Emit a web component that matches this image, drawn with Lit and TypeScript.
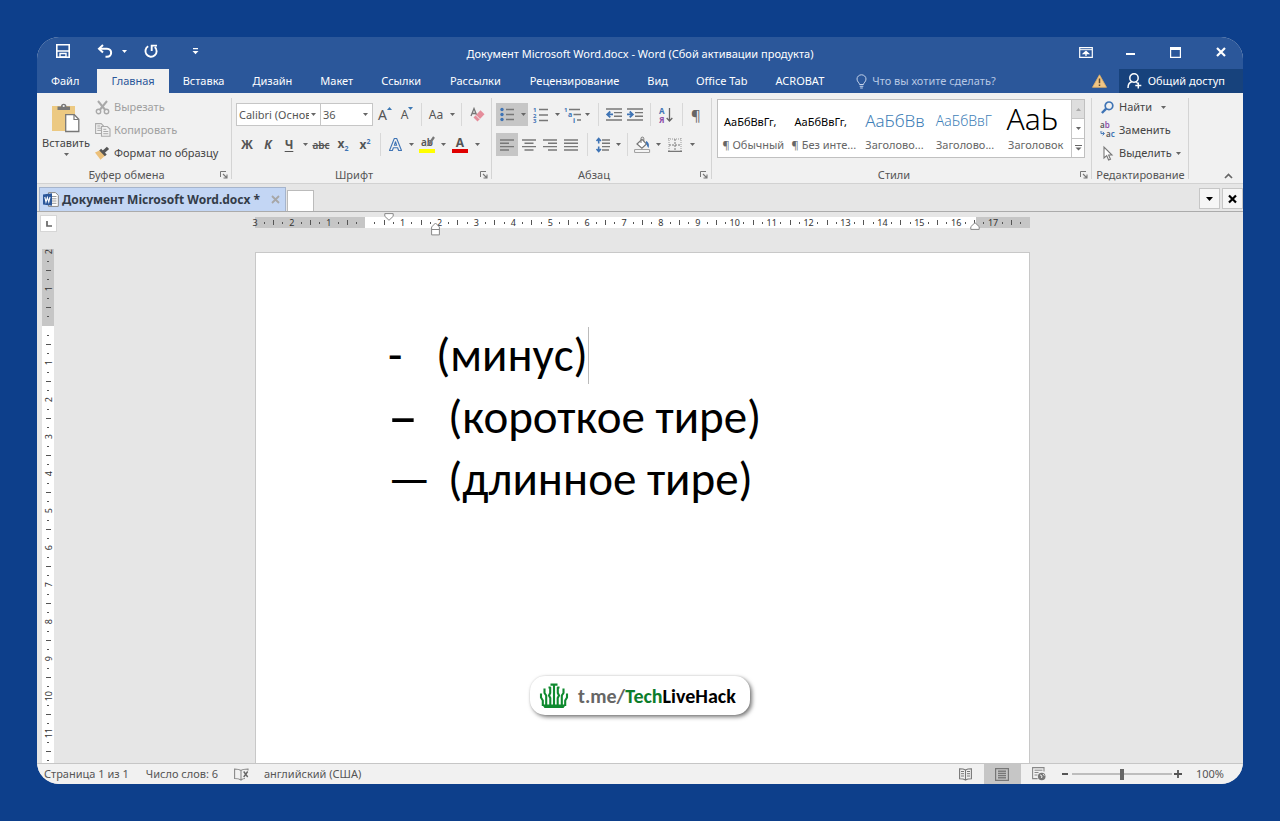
import { LitElement, html, svg, css } from "lit";
import { customElement } from "lit/decorators.js";
import { classMap } from "lit/directives/class-map.js";

type Kind = "num" | "dot" | "bar";
interface Tick { kind: Kind; text: string }

/** Four ticks for each centimetre: its number, a dot, a bar and a dot. */
function ticks(before: number, after: number): Tick[] {
  const out: Tick[] = [];
  for (let cm = -before; cm < after; cm++) {
    out.push({ kind: "num", text: cm === 0 ? "" : String(Math.abs(cm)) });
    out.push({ kind: "dot", text: "" }, { kind: "bar", text: "" }, { kind: "dot", text: "" });
  }
  return out;
}

const icon = (w: number, h: number, body: unknown) =>
  html`<svg width=${w} height=${h} viewBox="0 0 ${w} ${h}" fill="none" aria-hidden="true">${body}</svg>`;

const caret = () => icon(5, 3, svg`<path d="M0 0h5L2.500 3z" fill="#666"/>`);

const lines = (rows: number[][], color = "#777") =>
  rows.map(([x, y, w]) => svg`<path d="M${x} ${y}h${w}" stroke=${color} stroke-width="1.4"/>`);

const icons = {
  save: icon(16, 16, svg`<path d="M1.8 1.8h12.4v12.4H1.8z" stroke="#fff" stroke-width="1.6"/><path d="M1.8 8h12.4" stroke="#fff" stroke-width="1.6"/><path d="M5 10.500h6V14H5z" stroke="#fff" stroke-width="1.4"/>`),
  undo: icon(16, 14, svg`<path d="M6 1L2 4.700l4 3.800" stroke="#fff" stroke-width="2"/><path d="M2.500 4.700H10c5.500 0 5.500 8 0 8H8.500" stroke="#fff" stroke-width="2"/>`),
  redo: icon(14, 14, svg`<path d="M4.200 2.300A5.600 5.600 0 1 0 10.800 3" stroke="#fff" stroke-width="1.900"/><path d="M7.700 7V1.600h5.300" stroke="#fff" stroke-width="1.900"/>`),
  custom: icon(7, 7, svg`<path d="M1 .7h5" stroke="#fff" stroke-width="1.300"/><path d="M.5 3h6l-3 3.200z" fill="#fff"/>`),
  display: icon(14, 11, svg`<path d="M.7.700h12.600v9.600H.7z" stroke="#fff" stroke-width="1.200"/><path d="M1 2.700h12" stroke="#fff"/><path d="M7 9V5M4.500 6.600L7 4.300l2.500 2.300z" stroke="#fff" stroke-width="1.300"/>`),
  min: icon(10, 10, svg`<path d="M0 7h9" stroke="#fff" stroke-width="2"/>`),
  max: icon(11, 11, svg`<path d="M.6 1h9.800v9.300H.6z" stroke="#fff" stroke-width="1.200"/><path d="M0 1.500h11" stroke="#fff" stroke-width="3"/>`),
  close: icon(10, 10, svg`<path d="M1 1l8 8M9 1L1 9" stroke="#fff" stroke-width="2.200"/>`),
  bulb: icon(11, 15, svg`<path d="M3.500 10.500C3.500 8.500 1 8 1 5a4.500 4.200 0 0 1 9 0c0 3-2.500 3.500-2.500 5.500z" stroke="#c3d2ea"/><path d="M3.700 12.300h3.600M4.200 14h2.600" stroke="#c3d2ea"/>`),
  warn: icon(15, 14, svg`<path d="M7.500.8L14.500 13.300H.5z" fill="#f2c685" stroke="#e2ae62" stroke-width=".8"/><path d="M7.500 4.500v4.800M7.500 10.400v1.600" stroke="#5b4a35" stroke-width="1.500"/>`),
  person: icon(15, 16, svg`<circle cx="7" cy="5" r="4.200" stroke="#fff" stroke-width="1.500"/><path d="M1 15c0-3.500 1.800-5.800 4.300-6.400M8.500 8.600c1 .4 1.600 1 2.100 1.900M11.300 9.500v6M8.300 12.500h6" stroke="#fff" stroke-width="1.500"/>`),
  paste: icon(28, 31, svg`<path d="M0 4h23v25H0z" fill="#ecc982"/><path d="M5.500 8V4.500H9a2.700 2.700 0 0 1 5.400 0H18V8z" fill="#777"/><circle cx="11.700" cy="4" r="1.100" fill="#f1f1f1"/><path d="M13.700 12.700h8.600l4.500 4.500V29.500H13.700z" fill="#fff" stroke="#777" stroke-width="1.300"/><path d="M22 13v4.500h4.600" stroke="#777" stroke-width="1.200"/>`),
  cut: icon(15, 15, svg`<path d="M3 1l7.300 9M12 1L4.700 10" stroke="#a9a9a9" stroke-width="2"/><circle cx="3.500" cy="11.500" r="2.200" stroke="#a9a9a9" stroke-width="1.400"/><circle cx="11.500" cy="11.500" r="2.200" stroke="#a9a9a9" stroke-width="1.400"/>`),
  copy: icon(16, 14, svg`<path d="M.6.600h5.600L8.500 3v7.500H.6z" stroke="#aaa" stroke-width="1.100"/><path d="M2.300 3h3M2.300 5.200h4M2.300 7.400h4" stroke="#aaa"/><path d="M6.500 3.500h5.800L15 6v7.300H6.500z" fill="#f1f1f1" stroke="#aaa" stroke-width="1.100"/><path d="M8.300 6.300h3M8.300 8.500h5M8.300 10.700h5" stroke="#aaa"/>`),
  brush: icon(15, 14, svg`<path d="M0 6.500L5.500 4l5 5.200-5 4.600z" fill="#ecc07a"/><path d="M5.200 3.700l5.600 5.600" stroke="#555" stroke-width="2.600"/><path d="M8.300 6.200l4.700-4.400" stroke="#555" stroke-width="3.200"/>`),
  launch: icon(8, 8, svg`<path d="M.5 6V.5H6" stroke="#777"/><path d="M3 3l3.500 3.500M7 3.500V7H3.500" stroke="#777" stroke-width="1.100"/>`),
  up: icon(5, 3, svg`<path d="M0 3h5L2.500 0z" fill="#3c78b4"/>`),
  down: icon(5, 3, svg`<path d="M0 0h5L2.500 3z" fill="#3c78b4"/>`),
  eraser: icon(15, 15, svg`<path d="M1 9L4 1.500 7 9M2 6.500h4" stroke="#777" stroke-width="1.300"/><path d="M3.500 10.500l7-7.200 4 4-7 7.200z" fill="#e58d9b"/><path d="M5.800 8.200l4 4" stroke="#f1f1f1"/>`),
  outline: icon(15, 15, svg`<path d="M1.500 13.500L6.300 1.500h2.400l4.800 12h-2.900l-1-2.800H5.400l-1 2.800zM6.300 8.300h2.400L7.500 4.700z" stroke="#3f74b5" stroke-width="1.100" stroke-linejoin="round"/>`),
  pen: icon(10, 11, svg`<path d="M9 1L4.500 7.500" stroke="#777" stroke-width="2.200"/><path d="M4.700 6.800L1 10.500l4.500-1.800z" fill="#777"/>`),
  bullets: icon(14, 15, svg`${[2.5, 7.5, 12.5].map(y => svg`<circle cx="2" cy=${y} r="1.700" fill="#3f74b5"/>`)}${lines([[6, 2.5, 8], [6, 7.5, 8], [6, 12.5, 8]])}`),
  numbers: icon(15, 16, svg`${["1", "2", "3"].map((n, i) => svg`<text x="0" y=${5 + i * 5.5} font-size="6" font-weight="700" fill="#3f74b5">${n}</text>`)}${lines([[6, 2.5, 9], [6, 8, 9], [6, 13.5, 9]])}`),
  levels: icon(17, 16, svg`<text x="0" y="5" font-size="6" font-weight="700" fill="#3f74b5">1</text><text x="4" y="10" font-size="7" font-weight="700" fill="#3f74b5">a</text><text x="9" y="16" font-size="7" font-weight="700" fill="#3f74b5">i</text>${lines([[5, 2.5, 11], [9.5, 7.5, 7.500], [13, 13, 4]])}`),
  outdent: icon(16, 13, svg`${lines([[0, 1, 16], [8, 4.600, 8], [8, 8.200, 8], [0, 12, 16]])}<path d="M7 6.400H2M4.300 3.500L1.200 6.400l3.100 2.900" stroke="#3f74b5" stroke-width="1.800"/>`),
  indent: icon(16, 13, svg`${lines([[0, 1, 16], [8, 4.600, 8], [8, 8.200, 8], [0, 12, 16]])}<path d="M0 6.400h5M2.700 3.500l3.100 2.900-3.100 2.900" stroke="#3f74b5" stroke-width="1.800"/>`),
  sort: icon(14, 16, svg`<text x="0" y="6.500" font-size="8" font-weight="700" fill="#3f74b5">А</text><text x="0" y="15.500" font-size="8" font-weight="700" fill="#8d4fa8">Я</text><path d="M10.500 1v13M7.700 11l2.800 3 2.800-3" stroke="#666" stroke-width="1.300"/>`),
  alignL: icon(14, 12, svg`${lines([[0, 1, 14], [0, 4.300, 9], [0, 7.600, 14], [0, 11, 9]])}`),
  alignC: icon(14, 12, svg`${lines([[0, 1, 14], [2.500, 4.300, 9], [0, 7.600, 14], [2.500, 11, 9]])}`),
  alignR: icon(14, 12, svg`${lines([[0, 1, 14], [5, 4.300, 9], [0, 7.600, 14], [5, 11, 9]])}`),
  alignJ: icon(14, 12, svg`${lines([[0, 1, 14], [0, 4.300, 14], [0, 7.600, 14], [0, 11, 14]])}`),
  spacing: icon(14, 16, svg`${lines([[6, 3, 8], [6, 6.300, 8], [6, 9.600, 8], [6, 13, 7]])}<path d="M2.700 2v4.500M2.700 9.500V14M.5 4l2.200-2.600L4.900 4M.5 12l2.200 2.600L4.900 12" stroke="#3f74b5" stroke-width="1.600"/>`),
  bucket: icon(17, 16, svg`<path d="M3 7l5-4.700 4.500 4.700-4.600 4.300z" fill="#fff" stroke="#777" stroke-width="1.200"/><path d="M7 6V1.500a1.400 1.400 0 0 1 2.800 0V4" stroke="#777"/><path d="M12 4c3 1.500 3.500 4 2.500 7-1.200-1-1.500-3-2.500-5z" fill="#3f74b5"/><path d="M.6 12.600h15v2.800H.6z" fill="#fff" stroke="#999"/>`),
  borders: icon(14, 14, svg`<path d="M1 0v13M13 0v13M0 1h14" stroke="#999" stroke-dasharray="1 1"/><path d="M7 1v12M1 7h12" stroke="#777" stroke-dasharray="2 1"/><path d="M0 13.300h14" stroke="#777" stroke-width="1.300"/>`),
  find: icon(13, 13, svg`<circle cx="8" cy="4.800" r="3.800" stroke="#3f74b5" stroke-width="1.700"/><path d="M5.200 7.600L.9 12" stroke="#3f74b5" stroke-width="2.400"/>`),
  replace: icon(16, 16, svg`<text x="0" y="6" font-size="8" font-weight="600" fill="#555">a<tspan fill="#8d4fa8">b</tspan></text><text x="6" y="15" font-size="8" font-weight="600" fill="#555">a<tspan fill="#3f74b5">c</tspan></text><path d="M1 9v2.600h3M2.700 9.800l1.700 1.800-1.700 1.800" stroke="#3f74b5"/>`),
  pointer: icon(10, 15, svg`<path d="M1 1v11l2.700-2.400L5.600 14l1.900-.8-1.900-4.200H9z" fill="#fff" stroke="#777" stroke-width="1.100"/>`),
  collapse: icon(9, 6, svg`<path d="M1 5l3.500-3.500L8 5" stroke="#666" stroke-width="1.700"/>`),
  doc: icon(16, 15, svg`<path d="M5.500.6h7l2.800 2.800v11H5.500z" fill="#fff" stroke="#888"/><path d="M8.500 4.500h5M8.500 6.800h5M8.500 9h5M8.500 11.300h5" stroke="#999"/><path d="M0 2.500l9-1.300v12.500l-9-1.300z" fill="#2b579a"/><path d="M1.800 5l1.200 5 1.400-4.500L5.800 10 7 5" stroke="#fff" stroke-width="1.100"/>`),
  tabClose: icon(9, 9, svg`<path d="M1 1l7 7M8 1L1 8" stroke="#a7a7a7" stroke-width="1.800"/>`),
  barMenu: icon(7, 4, svg`<path d="M0 0h7L3.500 4z" fill="#000"/>`),
  barClose: icon(9, 8, svg`<path d="M1 .5l7 7M8 .5l-7 7" stroke="#000" stroke-width="2.200"/>`),
  tabStop: icon(6, 6, svg`<path d="M1 0v5h5" stroke="#666" stroke-width="1.700"/>`),
  firstLine: icon(10, 8, svg`<path d="M.8.600h8.400v2.700L5 7.300.8 3.300z" fill="#fff" stroke="#888"/>`),
  hanging: icon(9, 14, svg`<path d="M.6 12.900V5l3.900-4 3.900 4v7.900zM.6 7.500h7.800" fill="#fff" stroke="#888"/>`),
  rightIndent: icon(10, 8, svg`<path d="M.8 7.400h8.400V4.700L5 .7.800 4.700z" fill="#fff" stroke="#888"/>`),
  proof: icon(16, 13, svg`<path d="M7 2.500C5 1 3 1 .6 1v9.500c2.400 0 4.400 0 6.400 1.500 1.500-1.200 2.500-1.500 4-1.500M7 2.500V12M7 2.500C8.500 1.200 10 1 14 1v1.500" stroke="#888" stroke-width="1.100"/><path d="M9.700 3.500l4 5.500M13.700 3.500l-4 5.500" stroke="#666" stroke-width="1.400"/>`),
  read: icon(13, 13, svg`<path d="M6.500 2C4.500.8 2.800.8.600.8v10c2.200 0 3.900 0 5.900 1.200 2-1.200 3.700-1.200 5.900-1.200V.8c-2.200 0-3.900 0-5.900 1.200zM6.500 2v10" stroke="#777" stroke-width="1.100"/><path d="M2 3.500h3M2 5.700h3M2 8h3M8 3.500h3M8 5.700h3M8 8h3" stroke="#777"/>`),
  print: icon(14, 13, svg`<path d="M.6.600h12.800v11.800H.6z" stroke="#777" stroke-width="1.200"/>${lines([[3, 3.200, 8], [3, 5.400, 8], [3, 7.600, 8], [3, 9.800, 8]])}`),
  web: icon(14, 14, svg`<path d="M12 4.500V.6H.6v11h5" stroke="#888" stroke-width="1.100"/><path d="M2.500 3.200h8M2.500 5.500h4M2.500 8h3" stroke="#888"/><circle cx="9.700" cy="9.500" r="3.800" fill="#777"/><path d="M8 7.800l2 1.200-.5 2M11 7l1.300 1.700" stroke="#eee"/>`),
  coral: icon(28, 26, svg`<g stroke="#0f8a2f" stroke-width="2.100" stroke-linejoin="round"><path d="M10.500 1.600h7M14 2v21M8.500 4.500h1.700V10L9 12.500l1.300 2.500v8M19.500 4.500h-1.700V10l1.200 2.500-1.300 2.500v8M4.500 5.500V10l1.700 2.500v10M23.500 5.500V10l-1.700 2.500v10M1 10.500v4l1.800 3V23M27 10.500v4l-1.800 3V23"/></g><path d="M2 21.500h24l-2.500 3.500h-19z" fill="#0f8a2f"/>`),
};

const TABS = ["Файл", "Главная", "Вставка", "Дизайн", "Макет", "Ссылки", "Рассылки", "Рецензирование", "Вид", "Office Tab", "ACROBAT"];

const STYLES = [
  { sample: "АаБбВвГг,", name: "¶ Обычный", look: "plain" },
  { sample: "АаБбВвГг,", name: "¶ Без инте...", look: "plain" },
  { sample: "АаБбВв", name: "Заголово...", look: "h1" },
  { sample: "АаБбВвГ", name: "Заголово...", look: "h2" },
  { sample: "АаЬ", name: "Заголовок", look: "top" },
];

const DOC = [
  { mark: "-", text: "(минус)", size: "short" },
  { mark: "–", text: "(короткое тире)", size: "long" },
  { mark: "—", text: "(длинное тире)", size: "wide" },
];

@customElement("app-root")
export class AppRoot extends LitElement {
  static styles = css`
    :host {
      display: flex;
      box-sizing: border-box;
      min-height: 100vh;
      padding: 37px;
      background: #0d3f8b;
      font: 11px/16px "Noto Sans", sans-serif;
      color: #444;
    }
    * { box-sizing: border-box; }
    svg { display: block; flex: none; overflow: visible; }
    svg text { font-family: "Noto Sans", sans-serif; }
    button, select, input { font: inherit; color: inherit; margin: 0; border: 0; padding: 0; background: none; border-radius: 0; }
    button, .tab { display: flex; align-items: center; justify-content: center; white-space: nowrap; }
    a { color: inherit; text-decoration: none; }
    .window {
      flex: 1; min-width: 0; display: flex; flex-direction: column;
      border-radius: 22px; overflow: hidden; background: #e6e6e6;
    }

    .titlebar { display: grid; grid-template-columns: 1fr auto 1fr; height: 32px; background: #2b579a; color: #fff; }
    .quick { display: flex; align-items: center; padding: 0 0 4px 12px; }
    .quick button { height: 24px; }
    .w28 { width: 28px; }
    .w44 { width: 44px; }
    .split { display: flex; width: 52px; padding-left: 14px; }
    .title { padding-top: 9px; margin: 0; font: inherit; }
    .controls { display: flex; justify-content: flex-end; }
    .controls button { width: 45px; height: 30px; }

    .tabs { display: flex; height: 24px; background: #2b579a; color: #fff; }
    .tab { padding: 0 14px; }
    .tab.file { padding-right: 18px; }
    .tab.on { background: #f1f1f1; color: #2b579a; }
    .tab.roomy { padding: 0 15px; }
    .ask { display: flex; align-items: center; gap: 5px; padding-left: 18px; color: #b7c8e4; flex: 1; }
    .ask input { width: 150px; }
    .ask input::placeholder { color: #b7c8e4; opacity: 1; }
    .warn { width: 39px; }
    .share { background: #17427c; gap: 6px; padding: 0 18px 0 8px; color: #fff; }

    .ribbon { display: flex; height: 91px; background: #f1f1f1; border-bottom: 1px solid #d2d2d2; }
    .group { position: relative; display: flex; flex-direction: column; padding-top: 10px; flex: none; }
    .group::after { content: ""; position: absolute; right: 0; top: 5px; bottom: 4px; width: 1px; background: #d4d4d4; }
    .group.clip { width: 195px; padding-top: 3px; }
    .group.font { width: 260px; }
    .group.para { width: 220px; }
    .group.styles { flex: 1; padding-top: 6px; min-width: 0; }
    .group.edit { width: 97px; padding-top: 3px; }
    .caption { display: flex; margin-top: auto; color: #555; }
    .caption span { flex: 1; text-align: center; }
    .caption button { width: 16px; height: 16px; }
    .body { display: flex; }
    .rows { display: flex; flex-direction: column; gap: 7px; padding-left: 4px; }
    .row { display: flex; height: 23px; align-items: stretch; color: #555; }
    .w20 { width: 20px; } .w21 { width: 21px; } .w22 { width: 22px; } .w24 { width: 24px; }
    .caret { width: 10px; }
    .on-tool { background: #c6c6c6; }
    .sep { width: 8px; display: flex; justify-content: center; }
    .sep.wide { width: 12px; }
    .sep::before { content: ""; width: 1px; background: #d8d8d8; }

    .paste { flex-direction: column; width: 58px; height: 66px; gap: 2px; }
    .list { display: flex; flex-direction: column; gap: 1px; }
    .list button { height: 22px; justify-content: flex-start; gap: 4px; }
    .list .ico { width: 15px; display: flex; justify-content: center; }
    .list .off { color: #a0a0a0; }
    .list .after { margin-left: 5px; }
    .edit .list { padding-left: 8px; }

    .combo { position: relative; height: 23px; border: 1px solid #c6c6c6; background: #fff; display: flex; align-items: center; }
    .combo select { appearance: none; width: 100%; height: 21px; padding: 0 11px 0 2px; text-overflow: clip; }
    .combo svg { position: absolute; right: 4px; pointer-events: none; }
    .combo.name { width: 85px; }
    .combo.size { width: 53px; margin-left: -1px; }
    .big { font-size: 14px; }
    .mid { font-size: 12px; }
    .heavy { font-weight: 700; font-size: 12px; }
    .small { font-weight: 600; font-size: 10px; }
    .row sup, .row sub { font-size: 7px; line-height: 8px; color: #3f74b5; }
    .sup-ico { align-self: flex-start; padding-top: 4px; }
    .under { text-decoration: underline; text-underline-offset: 2px; }
    .strike { text-decoration: line-through; }
    .inked { flex-direction: column; position: relative; line-height: 13px; }
    .inked i { width: 16px; height: 4px; background: #ff0; }
    .inked i.red { background: #e00000; }
    .inked .pen { position: absolute; left: 9px; top: 3px; }
    .pilcrow { font-size: 15px; color: #666; }

    .gallery { display: flex; height: 59px; margin: 0 7px 0 5px; border: 1px solid #c0c0c0; background: #fff; }
    .cards { flex: 1; display: grid; grid-template-columns: repeat(5, 1fr); min-width: 0; }
    .cards button { flex-direction: column; justify-content: flex-end; padding: 0 4px 4px; min-width: 0; color: #666; }
    .sample { display: flex; align-items: center; width: 100%; height: 36px; color: #000; }
    .plain { padding: 6px 0 0 2px; }
    .h1 { padding: 4px 0 0 2px; color: #3f7fb8; font-size: 17px; font-weight: 300; }
    .h2 { padding: 4px 0 0 2px; color: #3f7fb8; font-size: 14px; font-weight: 300; }
    .top { padding-left: 2px; font-size: 30px; line-height: 36px; font-weight: 300; }
    .scroll { display: flex; flex-direction: column; width: 13px; border-left: 1px solid #c6c6c6; }
    .scroll button { flex: 1; border-bottom: 1px solid #c6c6c6; }
    .scroll button:first-child { background: #dedede; }
    .scroll button:last-child { border-bottom: 0; }
    .fold { width: 54px; align-items: flex-end; justify-content: flex-end; padding: 0 10px 4px 0; }

    .docs { display: flex; align-items: flex-end; height: 28px; padding-left: 2px; border-bottom: 1px solid #ababab; }
    .docs .doc { height: 24px; gap: 3px; padding: 0 5px 0 3px; background: #c3d6f4; border: 1px solid #a5b4cc; border-bottom: 0; font-size: 12px; font-weight: 700; color: #333c48; }
    .doc button { margin-left: 8px; }
    .docs .new { width: 27px; height: 21px; margin-left: 1px; background: #fff; border: 1px solid #bbb; border-bottom: 0; }
    .docs .tools { display: flex; gap: 2px; margin: 0 0 2px auto; }
    .tools button { width: 21px; height: 21px; background: #f6f6f6; border: 1px solid #c6c6c6; }

    .work { flex: 1; display: grid; grid-template: 40px minmax(0, 1fr) / 1fr minmax(0, 775px) 1fr; padding-left: 5px; min-height: 0; }
    .stop { width: 17px; height: 17px; margin-top: 3px; margin-left: -2px; background: #fff; border: 1px solid #d6d6d6; }
    .hruler { position: relative; display: grid; grid-template-columns: repeat(84, 1fr); height: 11px; margin-top: 5px; background: linear-gradient(90deg, #c6c6c6 14.2%, #fff 14.2%, #fff 93%, #c6c6c6 93%); }
    .tick { display: flex; align-items: center; justify-content: center; font-size: 9px; line-height: 11px; color: #333; }
    .hruler .tick { width: 0; }
    .dot::before { content: ""; flex: none; width: 1px; height: 2px; background: #555; }
    .bar::before { content: ""; flex: none; width: 1px; height: 5px; background: #555; }
    .marker { position: absolute; }
    .m-first { left: 17%; top: -4px; margin-left: -3px; }
    .m-hang { left: 23%; top: 5px; margin-left: -2px; }
    .m-right { left: 93%; top: 5px; margin-left: -6px; }
    .vruler { grid-column: 1; width: 12px; margin-top: -3px; padding-top: 3px; contain: size; overflow: hidden; background: linear-gradient(#c6c6c6 77px, #fff 77px); }
    .vruler .tick { height: 0; }
    .vscale { display: grid; grid-auto-rows: 37px; }
    .vcell { display: grid; grid-template-rows: repeat(4, 1fr); }
    .vruler .num span { writing-mode: vertical-rl; transform: rotate(180deg); }
    .vruler .dot::before { width: 2px; height: 1px; }
    .vruler .bar::before { width: 5px; height: 1px; }

    .page { background: #fff; border: 1px solid #c8c8c8; border-bottom: 0; padding: 74px 20px 0 132px; min-height: 0; overflow: hidden; position: relative; }
    .line { display: flex; margin: 0; height: 62px; line-height: 56px; font-family: Carlito, Calibri, "Noto Sans", sans-serif; font-size: 47px; color: #000; white-space: nowrap; }
    .mark { width: 60px; }
    .mark.short { width: 48px; }
    .mark.long { font-size: 60px; }
    .cursor { width: 1px; height: 57px; background: #bbb; }

    .badge {
      position: absolute; left: 274px; bottom: 48px; display: flex; align-items: center; gap: 10px;
      height: 39px; padding: 0 14px 0 10px; border-radius: 15px; background: #fff;
      box-shadow: 2px 2px 4px #0008, 0 0 2px #0002;
      font: 700 20px/24px Carlito, "Open Sans", sans-serif; color: #666;
    }
    .green { color: #0d7d2b; }
    .black { color: #000; }

    .status { display: flex; align-items: center; height: 21px; padding: 0 19px 0 7px; background: #f1f1f1; border-top: 1px solid #c6c6c6; color: #555; }
    .status .words { margin-left: 17px; }
    .status .proof { margin: 0 14px 0 16px; }
    .views { display: flex; align-self: stretch; margin-left: auto; }
    .views button { width: 37px; height: 20px; }
    .zoom { display: flex; align-items: center; gap: 2px; padding-left: 3px; }
    .step { width: 9px; height: 16px; }
    .slider { appearance: none; width: 100px; height: 12px; background: linear-gradient(#0000 5px, #bdbdbd 5px, #bdbdbd 7px, #0000 7px); }
    .slider::-webkit-slider-thumb { appearance: none; width: 4px; height: 11px; background: #666; }
    .pct { margin-left: 11px; }
  `;

  private tool(body: unknown, label: string, width = "w22", extra = "") {
    return html`<button class="${width} ${extra}" aria-label=${label}>${body}</button>`;
  }

  private drop(label: string, extra = "") {
    return html`<button class="caret ${extra}" aria-label="${label}: варианты">${caret()}</button>`;
  }

  private caption(text: string, launcher = true) {
    return html`<div class="caption"><span>${text}</span>${launcher
      ? html`<button aria-label="${text}: параметры">${icons.launch}</button>` : null}</div>`;
  }

  private titlebar() {
    return html`<header class="titlebar">
      <div class="quick">
        <button class="w28" aria-label="Сохранить">${icons.save}</button>
        <div class="split">
          <button class="w28" aria-label="Отменить">${icons.undo}</button>
          <button class="caret" aria-label="Отменить: варианты">${icon(5, 3, svg`<path d="M0 0h5L2.500 3z" fill="#fff"/>`)}</button>
        </div>
        <button class="w44" aria-label="Повторить">${icons.redo}</button>
        <button class="w44" aria-label="Настройка панели">${icons.custom}</button>
      </div>
      <h1 class="title">Документ Microsoft Word.docx - Word (Сбой активации продукта)</h1>
      <div class="controls">
        <button aria-label="Параметры ленты">${icons.display}</button>
        <button aria-label="Свернуть">${icons.min}</button>
        <button aria-label="Развернуть">${icons.max}</button>
        <button aria-label="Закрыть">${icons.close}</button>
      </div>
    </header>`;
  }

  private tabs() {
    return html`<nav class="tabs">
      ${TABS.map((t, i) => html`<a href="#" class=${classMap({ tab: true, file: i === 0, on: i === 1, roomy: t === "Рассылки" })}>${t}</a>`)}
      <label class="ask">${icons.bulb}<input placeholder="Что вы хотите сделать?" aria-label="Что вы хотите сделать?"></label>
      <button class="warn" aria-label="Предупреждение">${icons.warn}</button>
      <button class="share">${icons.person}Общий доступ</button>
    </nav>`;
  }

  private clipboard() {
    return html`<section class="group clip">
      <div class="body">
        <button class="paste">${icons.paste}<span>Вставить</span>${caret()}</button>
        <div class="list">
          <button class="off"><span class="ico">${icons.cut}</span>Вырезать</button>
          <button class="off"><span class="ico">${icons.copy}</span>Копировать</button>
          <button><span class="ico">${icons.brush}</span>Формат по образцу</button>
        </div>
      </div>
      ${this.caption("Буфер обмена")}
    </section>`;
  }

  private font() {
    return html`<section class="group font">
      <div class="rows">
        <div class="row">
          <label class="combo name"><select aria-label="Шрифт"><option>Calibri (Основной текст)</option></select>${caret()}</label>
          <label class="combo size"><select aria-label="Размер шрифта"><option>36</option></select>${caret()}</label>
          ${this.tool(html`A<span class="sup-ico">${icons.up}</span>`, "Увеличить размер", "w24", "big")}
          ${this.tool(html`A<span class="sup-ico">${icons.down}</span>`, "Уменьшить размер", "w20", "mid")}
          <span class="sep"></span>
          ${this.tool("Aa", "Регистр", "w22", "mid")}${this.drop("Регистр")}
          <span class="sep"></span>
          ${this.tool(icons.eraser, "Удалить форматирование", "w24")}
        </div>
        <div class="row">
          ${this.tool("Ж", "Полужирный", "w22", "heavy")}
          ${this.tool(html`<em>К</em>`, "Курсив", "w20", "heavy")}
          ${this.tool(html`<span class="under">Ч</span>`, "Подчеркнутый", "w22", "heavy")}${this.drop("Подчеркнутый")}
          ${this.tool(html`<span class="strike">abc</span>`, "Зачеркнутый", "w22", "small")}
          ${this.tool(html`<span>x<sub>2</sub></span>`, "Подстрочный", "w22", "heavy")}
          ${this.tool(html`<span>x<sup>2</sup></span>`, "Надстрочный", "w22", "heavy")}
          <span class="sep"></span>
          ${this.tool(icons.outline, "Текстовые эффекты")}${this.drop("Эффекты")}
          ${this.tool(html`<span>ab</span><i></i><span class="pen">${icons.pen}</span>`, "Цвет выделения", "w22", "inked small")}${this.drop("Выделение")}
          ${this.tool(html`<span>A</span><i class="red"></i>`, "Цвет текста", "w24", "inked heavy")}${this.drop("Цвет текста")}
        </div>
      </div>
      ${this.caption("Шрифт")}
    </section>`;
  }

  private paragraph() {
    return html`<section class="group para">
      <div class="rows">
        <div class="row">
          ${this.tool(icons.bullets, "Маркеры", "w22", "on-tool")}${this.drop("Маркеры", "on-tool")}
          ${this.tool(icons.numbers, "Нумерация", "w24")}${this.drop("Нумерация")}
          ${this.tool(icons.levels, "Многоуровневый список", "w20")}${this.drop("Список")}
          <span class="sep wide"></span>
          ${this.tool(icons.outdent, "Уменьшить отступ", "w20")}
          ${this.tool(icons.indent, "Увеличить отступ", "w22")}
          <span class="sep"></span>
          ${this.tool(icons.sort, "Сортировка", "w24")}
          <span class="sep"></span>
          ${this.tool("¶", "Отобразить все знаки", "w20", "pilcrow")}
        </div>
        <div class="row">
          ${this.tool(icons.alignL, "По левому краю", "w22", "on-tool")}
          ${this.tool(icons.alignC, "По центру", "w21")}
          ${this.tool(icons.alignR, "По правому краю", "w21")}
          ${this.tool(icons.alignJ, "По ширине", "w21")}
          <span class="sep wide"></span>
          ${this.tool(icons.spacing, "Интервал", "w20")}${this.drop("Интервал")}
          <span class="sep"></span>
          ${this.tool(icons.bucket, "Заливка", "w22")}${this.drop("Заливка")}
          ${this.tool(icons.borders, "Границы", "w24")}${this.drop("Границы")}
        </div>
      </div>
      ${this.caption("Абзац")}
    </section>`;
  }

  private styleGallery() {
    return html`<section class="group styles">
      <div class="gallery">
        <div class="cards">
          ${STYLES.map(s => html`<button><span class="sample ${s.look}">${s.sample}</span><span>${s.name}</span></button>`)}
        </div>
        <div class="scroll">
          <button aria-label="Вверх">${icon(5, 3, svg`<path d="M0 3h5L2.500 0z" fill="#aaa"/>`)}</button>
          <button aria-label="Вниз">${caret()}</button>
          <button aria-label="Все стили">${icon(7, 6, svg`<path d="M0 .5h7" stroke="#666"/><path d="M.5 2.500h6l-3 3z" fill="#666"/>`)}</button>
        </div>
      </div>
      ${this.caption("Стили")}
    </section>`;
  }

  private editing() {
    return html`<section class="group edit">
      <div class="list">
        <button><span class="ico">${icons.find}</span>Найти<span class="after">${caret()}</span></button>
        <button><span class="ico">${icons.replace}</span>Заменить</button>
        <button><span class="ico">${icons.pointer}</span>Выделить${caret()}</button>
      </div>
      ${this.caption("Редактирование", false)}
    </section>`;
  }

  private tick(t: Tick) {
    return html`<span class="tick ${t.kind}"><span>${t.text}</span></span>`;
  }

  private workspace() {
    const down = ticks(2, 12);
    const cells = Array.from({ length: down.length / 4 }, (_, i) => down.slice(i * 4, i * 4 + 4));
    return html`<main class="work">
      <button class="stop" aria-label="Табуляция">${icons.tabStop}</button>
      <div class="hruler">
        ${ticks(3, 18).map(t => this.tick(t))}
        <span class="marker m-first">${icons.firstLine}</span>
        <span class="marker m-hang">${icons.hanging}</span>
        <span class="marker m-right">${icons.rightIndent}</span>
      </div>
      <div class="vruler"><div class="vscale">
        ${cells.map(c => html`<div class="vcell">${c.map(t => this.tick(t))}</div>`)}
      </div></div>
      <article class="page">
        ${DOC.map((l, i) => html`<p class="line"><span class="mark ${l.size}">${l.mark}</span><span>${l.text}</span>${i === 0
          ? html`<span class="cursor"></span>` : null}</p>`)}
        <a class="badge" href="#">${icons.coral}<span>t.me/<span class="green">Tech</span><span class="black">LiveHack</span></span></a>
      </article>
    </main>`;
  }

  render() {
    return html`<div class="window">
      ${this.titlebar()}
      ${this.tabs()}
      <div class="ribbon">
        ${this.clipboard()}${this.font()}${this.paragraph()}${this.styleGallery()}${this.editing()}
        <button class="fold" aria-label="Свернуть ленту">${icons.collapse}</button>
      </div>
      <div class="docs">
        <div class="doc tab">${icons.doc}<span>Документ Microsoft Word.docx *</span><button aria-label="Закрыть вкладку">${icons.tabClose}</button></div>
        <button class="new" aria-label="Новая вкладка"></button>
        <div class="tools"><button aria-label="Список вкладок">${icons.barMenu}</button><button aria-label="Закрыть документ">${icons.barClose}</button></div>
      </div>
      ${this.workspace()}
      <footer class="status">
        <span>Страница 1 из 1</span><span class="words">Число слов: 6</span>
        <button class="proof" aria-label="Правописание">${icons.proof}</button>
        <span>английский (США)</span>
        <div class="views">
          <button aria-label="Режим чтения">${icons.read}</button>
          <button class="on-tool" aria-label="Разметка страницы">${icons.print}</button>
          <button aria-label="Веб-документ">${icons.web}</button>
        </div>
        <div class="zoom">
          <button class="step" aria-label="Мельче">${icon(6, 2, svg`<path d="M0 1h6" stroke="#555" stroke-width="2"/>`)}</button>
          <input class="slider" type="range" min="10" max="190" value="100" aria-label="Масштаб">
          <button class="step" aria-label="Крупнее">${icon(8, 8, svg`<path d="M0 4h8M4 0v8" stroke="#555" stroke-width="1.800"/>`)}</button>
          <span class="pct">100%</span>
        </div>
      </footer>
    </div>`;
  }
}
